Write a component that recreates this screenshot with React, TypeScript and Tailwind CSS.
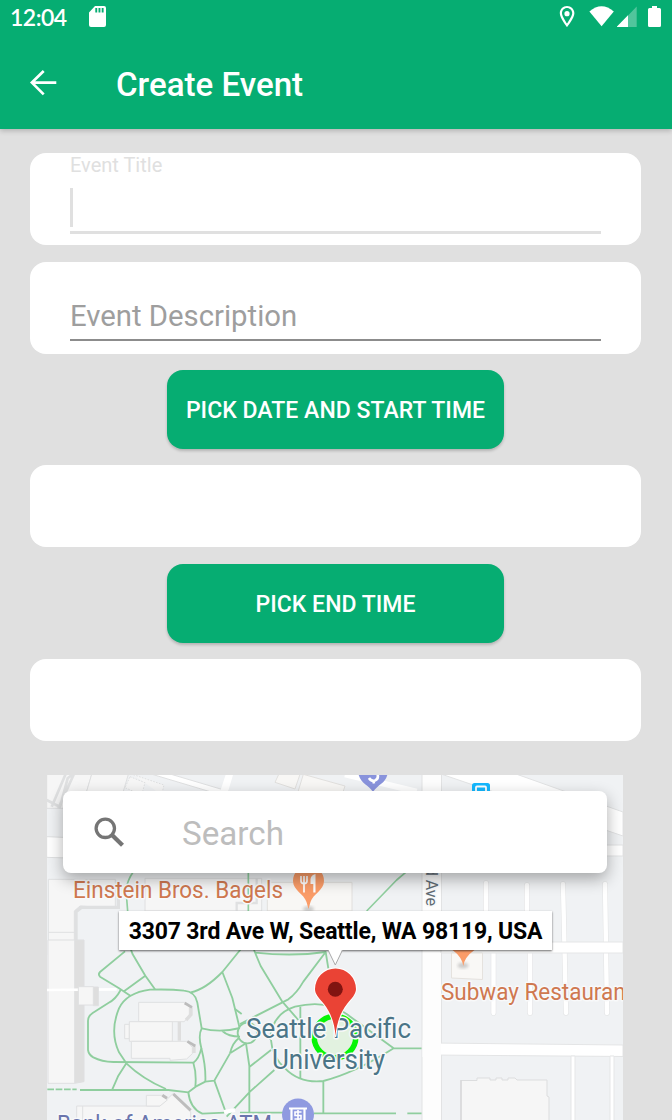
import type { ReactNode } from 'react';

function StatusBar() {
  return (
    <div className="flex h-[34px] items-center justify-between pl-[11px] pr-[10px] text-white">
      <div className="flex items-center">
        <span className="-ml-px w-[79px] whitespace-nowrap font-['Lato'] text-[23px] leading-[34px] tracking-[-0.5px] font-semibold">12:04</span>
        <svg className="-mt-px" width="17" height="21" viewBox="0 0 17 21" fill="currentColor">
          <path fillRule="evenodd" d="M6 0H15Q17 0 17 2V19Q17 21 15 21H2Q0 21 0 19V6.5ZM6.3 2V6.5H8.2V2ZM9.5 2V6.5H11.4V2ZM12.7 2V6.5H14.6V2Z" />
        </svg>
      </div>
      <svg width="103" height="22" viewBox="559 6 103 22" fill="currentColor">
        <path fillRule="evenodd" d="M567 6C563 6 559.8 9.2 559.8 13.2C559.8 18 567 27 567 27S574.4 18 574.4 13.2C574.4 9.2 571 6 567 6ZM567 8C569.9 8 572.2 10.3 572.2 13.2C572.2 16.3 567 23.5 567 23.5S562 16.3 562 13.2C562 10.3 564.1 8 567 8Z" />
        <circle cx="567" cy="13.7" r="2.6" />
        <path d="M589.4 11.5Q601.5 .8 613.8 11.5L601.6 26.3Z" />
        <path d="M636.7 6.5V27H617Z" opacity=".3" />
        <path d="M628 15.3V27H617V26.4Z" />
        <path d="M652 6H657V8H659.5Q661 8 661 9.5V25.5Q661 27 659.5 27H649.5Q648 27 648 25.5V9.5Q648 8 649.5 8H652Z" />
      </svg>
    </div>
  );
}

function Header() {
  return (
    <header className="relative z-10 h-[128.5px] bg-[#06ad72] shadow-[0_2px_5px_rgba(0,0,0,0.2)]">
      <StatusBar />
      <div className="flex h-[94px] items-center pl-[29px] text-white">
        <svg className="mt-px mb-[-3px]" width="28" height="27" viewBox="0 0 28 27" fill="none" stroke="currentColor" strokeWidth="2.7">
          <path d="M27.3 12.6H2.8M14.7 1L2.9 12.6L14.7 24.4" />
        </svg>
        <h1 className="ml-[59px] mt-[7px] whitespace-nowrap text-[33.1px] leading-10 font-medium">Create Event</h1>
      </div>
    </header>
  );
}

function Card({ children }: { children?: ReactNode }) {
  return <div className="h-[82px] rounded-[16px] bg-white">{children}</div>;
}

function PickButton({ label }: { label: string }) {
  return (
    <button className="mx-auto flex h-[79px] w-[337px] items-center justify-center rounded-[16px] bg-[#06ad72] pt-[4px] text-[23px] tracking-[0.04px] font-medium whitespace-nowrap text-white shadow-[0_2px_3px_rgba(0,0,0,0.2)]">
      {label}
    </button>
  );
}

function MapDrawing() {
  return (
    <svg className="block" width="576" height="346" viewBox="47 775 576 346" fontFamily="Roboto, sans-serif">
      <defs>
        <filter id="soft"><feGaussianBlur stdDeviation="1.4" /></filter>
      </defs>
      <rect x="47" y="774" width="576" height="347" fill="#f0f2f4" />

      {/* Upper-left blocks */}
      <g transform="translate(40 765) scale(.333333)" fill="#f6f6f6" stroke="#dfe0e1" strokeWidth="3">
        <path d="M20 28H155L125 130H20Z" />
        <path d="M155 28H265L235 130H125Z" />
        <path d="M80 20L35 125M105 20L55 130M20 105L60 126L83 40L108 20" strokeWidth="8" fill="none" />
        <path d="M270 35L315 53L305 90L255 68ZM280 29L372 60L365 90" strokeDasharray="5 4" />
        <path d="M310 20L660 125H720L340 12Z" fill="#fff" />
        <path d="M560 20L537 90H561L582 20Z" fill="#fff" stroke="none" />
        <path d="M20 215L760 245V300L20 277Z" fill="#fff" />
        <path d="M25 343H226V430L120 423L103 438V570H25Z" />
        <path d="M25 502H103" />
        <path d="M315 340H665V438H315Z" />
        <path d="M108 570V440L124 427H235V390" strokeWidth="10" fill="none" />
        <path d="M590 438V414H650V340" strokeWidth="7" fill="none" />
      </g>
      <g transform="translate(240 765) scale(.333333)" fill="#f8f7f5" stroke="#e1e0de" strokeWidth="3">
        <path d="M120 20L105 52L165 72L180 28M190 28L315 63L300 110H165Z" />
        <path d="M315 28L530 80" stroke="#fff" strokeWidth="18" />
        <path d="M82 352H336V438H82Z" />
      </g>

      {/* Western buildings */}
      <g transform="translate(40 940) scale(.333333)" fill="#f6f6f6" stroke="#dfe0e1" strokeWidth="3">
        <path d="M104 0H132V425L104 430Z" fill="#dfdfdf" />
        <path d="M24 0H104V430H24Z" />
        <path d="M20 150L230 148" stroke="#fff" strokeWidth="8" />
        <path d="M160 141H175V197H160Z" fill="#dedede" />
        <path d="M115 140H160V195H115Z" />
        <path d="M296 187H434L448 202V225L433 245H296Z" />
        <path d="M254 253H268V296H254Z" />
        <path d="M268 245H397V304H268Z" />
        <path d="M274 304H440L457 322V341L440 357L390 361V355H274Z" />
        <path d="M418 245V302M453 202V224L438 240M462 318V339" stroke="#dedede" strokeWidth="10" fill="none" />
        <path d="M434 189L456 202M442 304L466 318" stroke="#bcbcbc" strokeWidth="8" />
        <path d="M110 498H360L400 460L452 515V560H110Z" />
        <path d="M319 466H367L382 480L360 498H319ZM128 498V540" />
        <path d="M400 462L452 511M367 466L381 475" stroke="#bdbdbd" strokeWidth="9" />
      </g>

      {/* Footpaths */}
      <g fill="none" stroke="#8fce9e" strokeLinejoin="round">
        <g transform="translate(40 765) scale(.333333)" strokeWidth="5">
          <path d="M280 320Q262 345 258 375L263 438M625 320V438M980 438L1070 345L1097 322" />
        </g>
        <g transform="translate(40 940) scale(.333333)" strokeWidth="5.5">
          <path d="M255 34L180 96Q173 103 180 110L236 144L272 168M271 24L278 43L316 107L345 148M316 107L250 155" />
          <path d="M242 150Q227 178 205 189L158 219Q144 228 144 242V330Q146 344 160 352Q185 365 220 366L460 368Q477 356 484 325Q474 286 485 265L472 188Q466 155 432 152Q390 147 330 149Q260 158 237 205Q208 275 237 337L259 370" />
          <path d="M452 157Q495 149 547 96L610 18M547 96L577 174L598 260M570 340L523 422L496 425L467 440L445 457L385 450H120" />
          <path d="M22 448H110" strokeDasharray="20 5" />
          <path d="M485 265Q540 279 600 264M547 273Q565 290 600 290M484 325Q498 380 496 425M460 368Q470 400 466 440M259 370L235 407L217 448M259 370Q308 417 378 447M523 422L555 510M445 457Q450 505 487 521L555 518M570 340L618 310M570 340Q578 308 596 295M585 207L605 222" />
        </g>
        <g transform="translate(240 940) scale(.333333)" strokeWidth="5.5">
          <path d="M42 30L62 78L127 185L175 240M45 38Q160 50 257 36L265 85M257 36Q220 85 190 125Q170 160 145 178L0 252" />
          <ellipse cx="22" cy="279" rx="29" ry="31" />
          <path d="M181 200V415M18 310L28 378V520M-40 530L30 455L103 390M28 381L93 330" />
          <path d="M90 300Q95 222 165 200Q260 177 321 223L461 325H548M93 300Q96 350 135 385Q180 431 250 423Q340 401 461 325M250 423V520M0 518H130M220 520H468M502 520H548" />
        </g>
      </g>
      <path d="M224 1112L235 1110" stroke="#fff" strokeWidth="4" />

      {/* Streets and eastern blocks */}
      <rect x="422" y="774" width="19" height="347" fill="#fdfdfd" />
      <path d="M422 774V1121M441.5 774V1121" stroke="#e2e3e4" />
      <path d="M441 774L623 836V812L516 774Z" fill="#fff" stroke="#e2e3e4" />
      <path d="M590 845H623V856H590Z" fill="#fff" stroke="#e2e3e4" />
      <path d="M486 883V935L493.5 950V1013M527 885V940L530 950V1013M563 884L566 1013M605 884L607 1013" fill="none" stroke="#e3e4e5" strokeWidth="5.5" strokeLinecap="round" />
      <path d="M486 883V935L493.5 950V1013M527 885V940L530 950V1013M563 884L566 1013M605 884L607 1013" fill="none" stroke="#fff" strokeWidth="4.4" strokeLinecap="round" />
      <path d="M441 942H623V953H441Z" fill="#fff" stroke="#e5e6e7" />
      <path d="M432 1043L623 1045V1056.5L432 1055Z" fill="#fff" stroke="#e4e5e6" />
      <rect x="422.5" y="1040" width="18.5" height="17" fill="#fdfdfd" />
      <path d="M571 1056H575V1121H571ZM610 1056H614V1121H610Z" fill="#fff" stroke="#e5e6e7" />
      <path d="M451.5 953H482.5V979.5L451.5 978Z" fill="#f9f8f6" stroke="#e5e2de" />
      <path d="M461 1121V1080.5H477V1078H490V1080H496V1078H502V1080H508V1078H515L517 1080H547V1096L549 1097V1121" fill="#f6f6f6" stroke="#dcddde" />
      <path d="M461 1121V1080" stroke="#d8d9da" strokeWidth="1.5" />

      {/* Place markers */}
      <path d="M358 772C360 784 368 784 373 792C379 783 386 784 388 772Z" fill="#8993dc" />
      <path d="M369 778Q371 781.5 375 780.5Q379 779 377.5 774M373 780L374 783.5" fill="none" stroke="#fff" strokeWidth="2.6" />
      <rect x="472" y="783" width="18" height="20" rx="2.5" fill="#14b8ff" />
      <rect x="476" y="786.5" width="10" height="12" rx="1" fill="none" stroke="#fff" strokeWidth="1.8" />
      <ellipse cx="308.5" cy="909" rx="5.5" ry="3" fill="#a9a9a9" opacity=".55" filter="url(#soft)" />
      <path d="M308.5 909L306.5 902C304 894 293 890 293 881A15.5 15.5 0 0 1 324 881C324 890 313 894 310.5 902Z" fill="#fa9c68" />
      <path d="M301 876V881Q301 883.5 304 883.5Q307 883.5 307 881V876M304 876V892.5" fill="none" stroke="#fff" strokeWidth="1.7" />
      <path d="M315.5 874V892.5H313.3V884H310.5V879Q311 875 315.5 874Z" fill="#fff" />
      <ellipse cx="463" cy="965.5" rx="5.5" ry="3" fill="#a9a9a9" opacity=".55" filter="url(#soft)" />
      <path d="M452.5 950H474.5Q464.5 957 463.3 966Q462 957 452.5 950Z" fill="#fa9c68" />
      <circle cx="298" cy="1114.5" r="16" fill="#8f9ae0" />
      <path d="M289 1108.5H307M291.5 1109V1121M304.5 1109V1121" stroke="#fff" strokeWidth="2.2" fill="none" />
      <path d="M301.5 1112H295V1115.5H301V1119H294.5M298 1110V1121" stroke="#fff" strokeWidth="1.6" fill="none" />

      {/* Selected area */}
      <circle cx="335" cy="1037" r="20.8" fill="#e2f2e0" stroke="#06f506" strokeWidth="5.5" />

      <g fontSize="24" stroke="#f8f9fa" strokeWidth="3" paintOrder="stroke" strokeLinejoin="round">
        <text x="73" y="898" textLength="210" lengthAdjust="spacingAndGlyphs" fill="#cf7850">Einstein Bros. Bagels</text>
        <text x="441" y="1000" textLength="192" lengthAdjust="spacingAndGlyphs" fill="#cf7850">Subway Restaurant</text>
        <text x="57" y="1131.5" textLength="215" lengthAdjust="spacingAndGlyphs" fill="#6a75ad">Bank of America ATM</text>
        <text x="246" y="1038" fontSize="27" textLength="165" lengthAdjust="spacingAndGlyphs" fill="#4b7587">Seattle Pacific</text>
        <text x="272" y="1069" fontSize="27" textLength="113" lengthAdjust="spacingAndGlyphs" fill="#4b7587">University</text>
        <text transform="translate(425.5 906) rotate(90)" textAnchor="end" fontSize="16" fill="#606b73">3rd Ave</text>
      </g>

      {/* Selected pin */}
      <path d="M335.5 1036C334.8 1024 331 1013 324 1004C318 997 315 994 315 989A20.5 20.5 0 0 1 356 989C356 994 352 998 347 1004C340 1013 336.5 1024 335.5 1036Z" fill="#ea4335" stroke="#fff" strokeWidth="2" strokeLinejoin="round" paintOrder="stroke" />
      <circle cx="335.3" cy="989.3" r="7.5" fill="#811411" />
    </svg>
  );
}

function LocationMap() {
  return (
    <section className="relative mx-[17px] mt-[33.5px] h-[346px] overflow-hidden">
      <MapDrawing />
      <div className="absolute top-[16.5px] left-[16px] flex h-[82px] w-[544px] items-center rounded-[8px] bg-white text-[#bdbdbd] shadow-[0_6px_16px_rgba(0,0,0,0.32)]">
        <svg className="ml-[31px]" width="31" height="31" viewBox="0 0 31 31" fill="none" stroke="#757575">
          <circle cx="11.3" cy="11.3" r="9.2" strokeWidth="3.3" />
          <path d="M18 18L28.5 28.2" strokeWidth="4.3" />
        </svg>
        <span className="ml-[57px] pt-[4px] text-[33.2px]">Search</span>
      </div>
      <div className="absolute top-[136.5px] left-[72px] flex h-[39px] w-[433px] items-center justify-center bg-white pt-[4px] text-[23px] tracking-[-0.18px] font-bold whitespace-nowrap text-black shadow-[0_1px_2px_rgba(0,0,0,0.6)]">
        3307 3rd Ave W, Seattle, WA 98119, USA
        <svg className="absolute top-[38px] left-[209px]" width="15" height="18" viewBox="0 0 15 18">
          <path d="M0 0L7.3 16L14.5 0Z" fill="#fff" />
          <path d="M0 1L7.3 16L14.5 1" fill="none" stroke="#aaa" />
        </svg>
      </div>
    </section>
  );
}

export default function App() {
  return (
    <div className="h-[1120px] w-[672px] overflow-hidden bg-[#e0e0e0] font-['Roboto',sans-serif]">
      <Header />
      <main className="flex flex-col pt-[24.5px] pr-[31px] pl-[30px]">
        <div className="h-[92px] rounded-[16px] bg-white px-10">
          <div className="flex h-[81px] flex-col justify-between border-b-[3px] border-[#e0e0e0]">
            <label className="text-[20px] leading-6 text-[#e0e0e0]">Event Title</label>
            <div className="mb-[4.5px] h-[39px] w-[3px] bg-[#e0e0e0]" />
          </div>
        </div>
        <div className="mt-[17px] h-[92px] rounded-[16px] bg-white px-10">
          <div className="flex h-[79px] items-end border-b-2 border-[#8c8c8c] pb-[5.5px]">
            <span className="text-[29.3px] leading-9 text-[#9e9e9e]">Event Description</span>
          </div>
        </div>
        <div className="mt-4 flex"><PickButton label="PICK DATE AND START TIME" /></div>
        <div className="mt-[16px]"><Card /></div>
        <div className="mt-[17px] flex"><PickButton label="PICK END TIME" /></div>
        <div className="mt-4"><Card /></div>
        <LocationMap />
      </main>
    </div>
  );
}
